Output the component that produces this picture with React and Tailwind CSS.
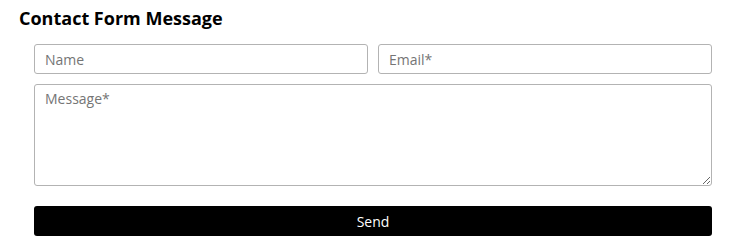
export default function App() {
  return (
    <div className="w-[748px] h-[246px] bg-white font-['Open_Sans',sans-serif] text-black">
      <h2 className="pl-[19px] pt-[6px] text-[18px] leading-[24px] font-bold">Contact Form Message</h2>
      <form className="mt-[14px] ml-[34px] w-[678px] flex flex-col" onSubmit={e => e.preventDefault()}>
        <div className="flex gap-[10px]">
          <input
            type="text"
            placeholder="Name"
            className="w-[334px] h-[30px] px-[10px] text-[14px] border border-[#b3b3b3] rounded-[3px] placeholder:text-[#757575] outline-none"
          />
          <input
            type="email"
            placeholder="Email*"
            className="w-[334px] h-[30px] px-[10px] text-[14px] border border-[#b3b3b3] rounded-[3px] placeholder:text-[#757575] outline-none"
          />
        </div>
        <textarea
          placeholder="Message*"
          className="mt-[10px] h-[102px] px-[10px] py-[3px] text-[14px] border border-[#b3b3b3] rounded-[3px] placeholder:text-[#757575] outline-none"
        />
        <button type="submit" className="mt-[20px] h-[30px] bg-black text-white text-[14px] rounded-[3px]">
          Send
        </button>
      </form>
    </div>
  )
}
